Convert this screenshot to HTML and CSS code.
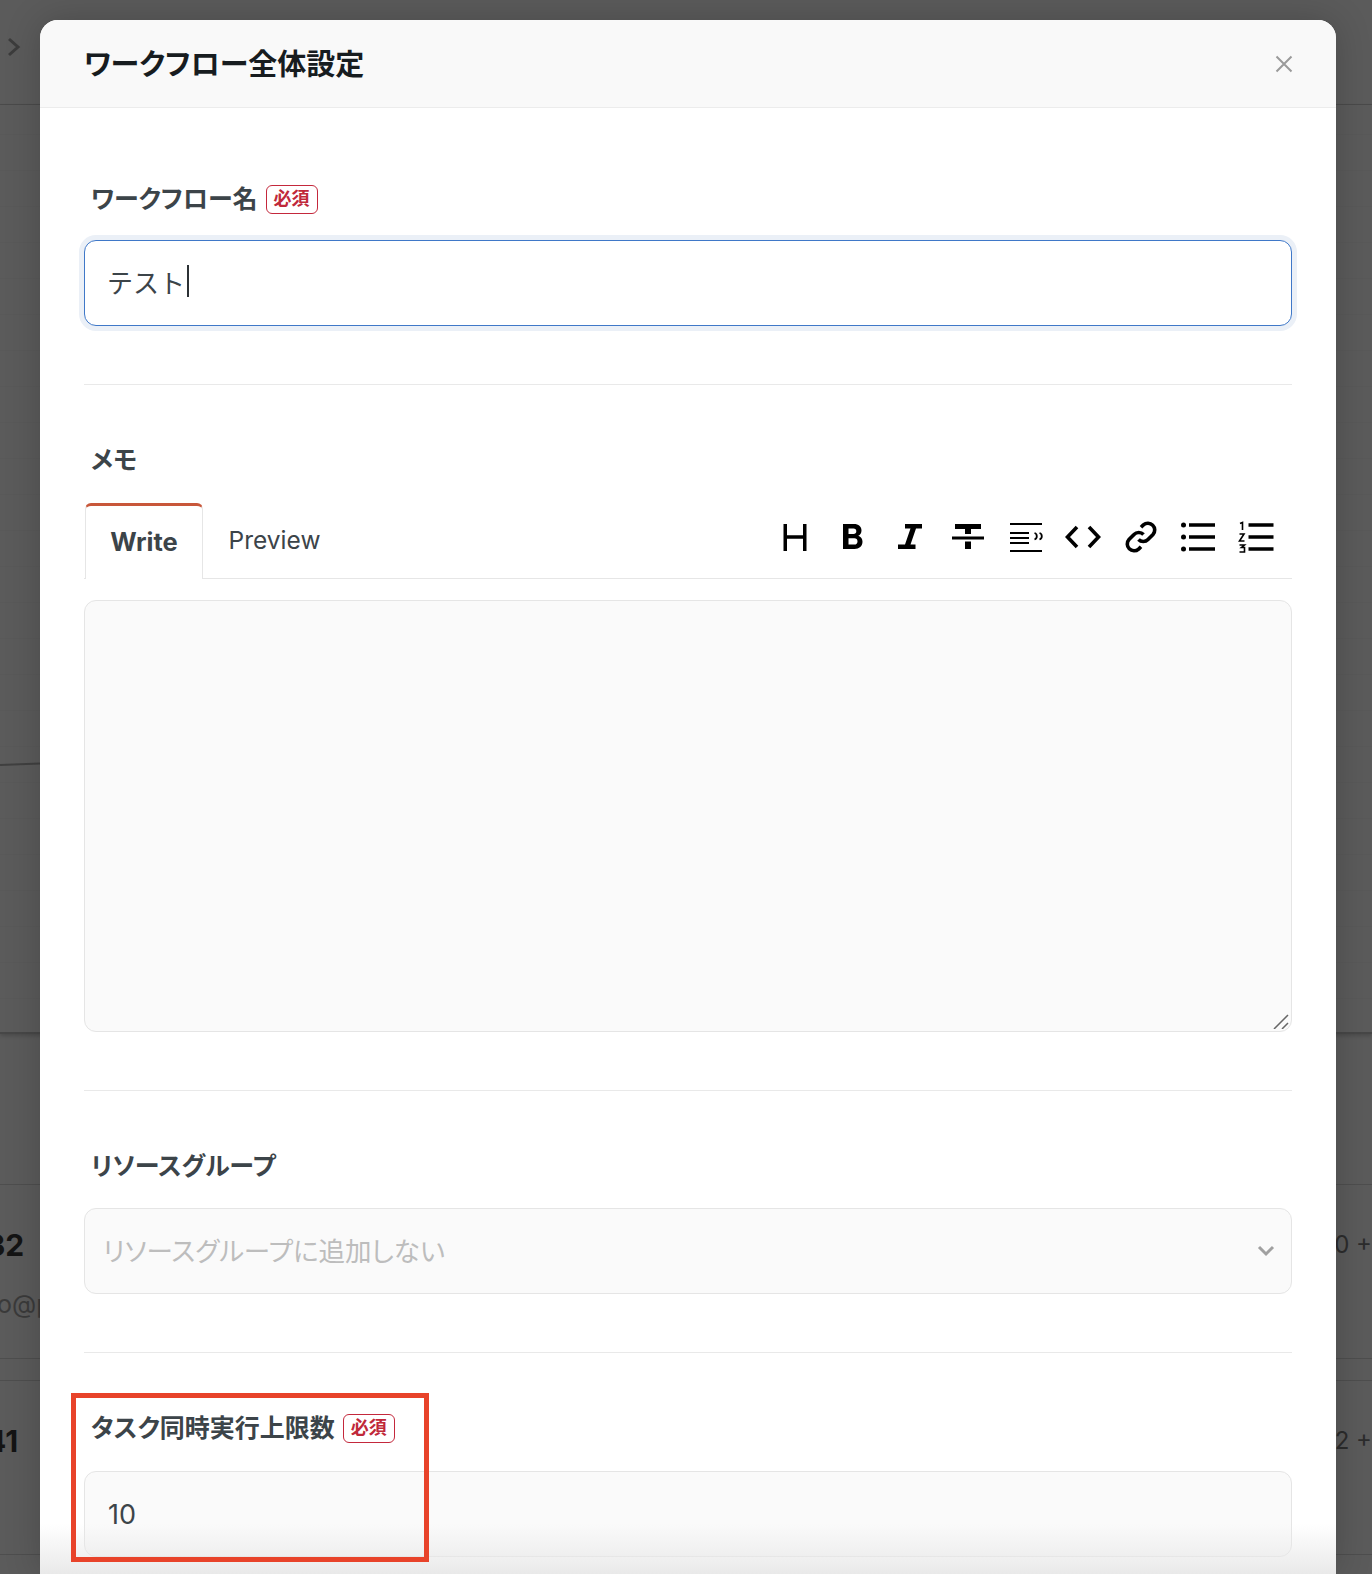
FILE: index.html
```html
<!DOCTYPE html>
<html lang="ja">
<head>
<meta charset="utf-8">
<title>ワークフロー全体設定</title>
<link rel="stylesheet" href="styles.css">
</head>
<body>
<div class="backdrop">
  <div class="bg-top">
    <svg class="bg-chevron" width="14" height="20" viewBox="0 0 14 20"><path d="M2 2l9 8-9 8" fill="none" stroke="#3c3c3c" stroke-width="3"/></svg>
  </div>
  <div class="bg-chart">
    <svg class="bg-curve" width="1372" height="8" viewBox="0 0 1372 8"><path d="M0 5L40 3.500" fill="none" stroke="#404040" stroke-width="2"/></svg>
  </div>
  <div class="bg-gap"></div>
  <div class="bg-row bg-row-a">
    <div class="bg-cell-left"><span class="bg-num">32</span><span class="bg-mail">o@p</span></div>
    <span class="bg-plus">0 +</span>
  </div>
  <div class="bg-sep"></div>
  <div class="bg-row bg-row-b">
    <div class="bg-cell-left"><span class="bg-num">41</span></div>
    <span class="bg-plus">2 +</span>
  </div>
</div>

<main class="modal">
  <header class="modal-head">
    <h1 class="modal-title">ワークフロー全体設定</h1>
    <svg class="close" width="18" height="18" viewBox="0 0 18 18"><path d="M1.500 1.500l15 15M16.500 1.500l-15 15" fill="none" stroke="#9a9a9a" stroke-width="2"/></svg>
  </header>
  <div class="modal-body">
    <section class="field field-first">
      <div class="label"><span>ワークフロー名</span><span class="badge">必須</span></div>
      <div class="control control-focus"><span class="typed">テスト</span><span class="caret"></span></div>
    </section>
    <section class="field">
      <div class="label"><span>メモ</span></div>
      <div class="tabbar">
        <div class="tab tab-active">Write</div>
        <div class="tab tab-plain">Preview</div>
        <div class="toolbar">
          <svg class="tool" width="36" height="32" viewBox="-2 0 36 32"><path d="M6.250 3v27M25.750 3v27M6.250 16h19.500" fill="none" stroke="#000" stroke-width="3.500"/></svg>
          <svg class="tool" width="36" height="32" viewBox="-2 0 36 32"><path fill-rule="evenodd" d="M6 3h11c4.500 0 7.500 2.500 7.500 6.500 0 2.500-1.200 4.300-3.200 5.300 2.700.9 4.200 3 4.200 6 0 4.500-3.300 7.200-8 7.200H6zM11.500 7.500v5.500h5c1.800 0 2.800-1 2.800-2.800s-1-2.700-2.800-2.700zM11.500 17.300v6.200h5.800c2 0 3.200-1.200 3.200-3.100s-1.200-3.100-3.200-3.100z"/></svg>
          <svg class="tool" width="36" height="32" viewBox="-2 0 36 32"><path d="M11 3h17v4.500h-6l-5.500 16h5V28H4v-4.500h7l5.500-16H11z"/></svg>
          <svg class="tool" width="36" height="32" viewBox="-2 0 36 32"><path d="M3 3h26v5H19v5h-6V8H3zM0 15.500h32v3H0zM13 20.500h6V28h-6z"/></svg>
          <svg class="tool" width="36" height="32" viewBox="-2 0 36 32"><path d="M0 3h32M0 12h19M0 17h19M0 22h19M0 30h32" fill="none" stroke="#000" stroke-width="2"/><path d="M24.500 12c1.800.5 2.300 1.800 2.300 3.200 0 1.500-.8 2.700-2.300 3.300M29.500 12c1.800.5 2.300 1.800 2.300 3.200 0 1.500-.8 2.700-2.300 3.300" fill="none" stroke="#000" stroke-width="1.800"/></svg>
          <svg class="tool" width="36" height="32" viewBox="0 0 36 32"><path d="M12 6L2.500 16l9.500 10M24 6l9.500 10L24 26" fill="none" stroke="#000" stroke-width="3.600"/></svg>
          <svg class="tool" width="36" height="32" viewBox="-2 0 36 32"><path d="M13.500 18.500a6.500 6.500 0 0 0 9.500 0l5-5a6.800 6.800 0 0 0-9.600-9.600l-2.400 2.400M18.500 13.500a6.500 6.500 0 0 0-9.500 0l-5 5a6.800 6.800 0 0 0 9.600 9.600l2.400-2.400" fill="none" stroke="#000" stroke-width="3.600"/></svg>
          <svg class="tool" width="36" height="32" viewBox="-1 0 36 32"><path d="M8 4h26M8 16h26M8 28h26" fill="none" stroke="#000" stroke-width="3.500"/><circle cx="2.500" cy="4" r="2.500"/><circle cx="2.500" cy="16" r="2.500"/><circle cx="2.500" cy="28" r="2.500"/></svg>
          <svg class="tool" width="36" height="32" viewBox="-.5 0 36 32"><path d="M10 4h25M10 16h25M10 28h25" fill="none" stroke="#000" stroke-width="3.500"/><path d="M1.500 2.500l2.500-1V9M1 13h4.500L1 20h5M1 24h5l-3 2.500h3V31H1" fill="none" stroke="#000" stroke-width="1.600"/></svg>
        </div>
      </div>
      <div class="memo">
        <svg class="resize" width="16" height="16" viewBox="0 0 16 16"><path d="M1 16L15 2M9 16l6-6" fill="none" stroke="#666" stroke-width="1.500"/></svg>
      </div>
    </section>
    <section class="field">
      <div class="label"><span>リソースグループ</span></div>
      <div class="control control-muted control-select">
        <span class="placeholder">リソースグループに追加しない</span>
        <svg width="18" height="12" viewBox="0 0 18 12"><path d="M2 2l7 7 7-7" fill="none" stroke="#a0a0a0" stroke-width="3"/></svg>
      </div>
    </section>
    <section class="field field-last">
      <div class="label"><span>タスク同時実行上限数</span><span class="badge">必須</span></div>
      <div class="control control-muted control-number"><span>10</span></div>
    </section>
  </div>
  <div class="fade"></div>
</main>
<div class="highlight"></div>
</body>
</html>
```
FILE: styles.css
```css
* { box-sizing: border-box; }
html, body { margin: 0; height: 1574px; }
body {
  position: relative;
  overflow: hidden;
  background: #5a5a5a;
  font-family: Inter, "Noto Sans CJK JP", sans-serif;
  color: #3c4449;
}

/* dimmed page behind the dialog */
.backdrop {
  position: absolute;
  inset: 0;
  background: #5b5b5b;
  display: flex;
  flex-direction: column;
}
.bg-top {
  height: 105px;
  flex: none;
  border-bottom: 1px solid #4c4c4c;
  padding: 37px 0 0 7px;
}
.bg-chevron { display: block; }
.bg-chart {
  height: 929px;
  flex: none;
  padding-top: 655px;
  border-bottom: 2px solid #474747;
  box-shadow: 0 2px 4px rgba(0,0,0,.18);
  background: repeating-linear-gradient(to bottom, transparent 0 29px, rgba(0,0,0,.028) 29px 30px, transparent 30px 36px);
}
.bg-curve { display: block; }
.bg-gap { height: 151px; flex: none; border-bottom: 1px solid #4e4e4e; }
.bg-row {
  flex: none;
  display: flex;
  justify-content: space-between;
}
.bg-row-a { height: 174px; padding-top: 42px; border-bottom: 1px solid #4e4e4e; }
.bg-sep { height: 22px; flex: none; border-bottom: 1px solid #4e4e4e; }
.bg-row-b { height: 174px; padding-top: 42px; border-bottom: 1px solid #4e4e4e; }
.bg-cell-left { display: flex; flex-direction: column; gap: 26px; margin-left: -14px; }
.bg-num { font-size: 30px; line-height: 36px; font-weight: 700; color: #141414; }
.bg-mail { font-size: 25px; line-height: 30px; color: #3a3a3a; margin-left: 11px; }
.bg-plus { font-size: 24px; line-height: 36px; color: #2c2c2c; white-space: nowrap; margin-right: 0; }

/* dialog */
.modal {
  position: relative;
  margin: 20px 36px 0 40px;
  height: 1554px;
  background: #fff;
  border-radius: 18px 18px 0 0;
  overflow: hidden;
  box-shadow: 0 0 36px rgba(0,0,0,.2);
}
.modal-head {
  height: 88px;
  padding: 2px 44px 0;
  background: #f9f9f9;
  border-bottom: 1px solid #ececec;
  display: flex;
  align-items: center;
  justify-content: space-between;
}
.modal-title {
  margin: 0;
  font-size: 29px;
  line-height: 40px;
  font-weight: 700;
  font-feature-settings: "palt";
  color: #171c1f;
}
.close { flex: none; margin: -2px -1px 0 0; }
.modal-body { padding: 0 44px; }
.field {
  padding: 57px 0 58px;
  border-bottom: 1px solid #e9e9e9;
}
.field-first { padding-top: 73px; }
.field-last { border-bottom: 0; }
.label {
  display: flex;
  align-items: center;
  gap: 8px;
  height: 32px;
  margin: 0 0 28px 7px;
  font-size: 25px;
  font-weight: 700;
  font-feature-settings: "palt";
  color: #3c4449;
}
.field-first .label { margin-bottom: 27px; }
.field-last .label { margin-bottom: 29px; }
.badge {
  height: 29px;
  margin-top: 5px;
  padding: 0 7px;
  border: 1px solid #c4283c;
  border-radius: 6px;
  font-size: 18px;
  line-height: 26px;
  font-feature-settings: normal;
  color: #c0283a;
  background: #fff;
}
.control {
  height: 86px;
  padding: 0 23px;
  border-radius: 12px;
  display: flex;
  align-items: center;
  font-size: 26px;
  color: #3c4449;
}
.control-focus {
  border: 1.500px solid #3f78c8;
  background: #fff;
  box-shadow: 0 0 0 5px #ebf0f7;
  padding: 0 22px 4px;
}
.caret {
  display: inline-block;
  width: 2px;
  height: 32px;
  margin-left: 2px;
  background: #2c3135;
}
.control-muted {
  background: #fafafa;
  border: 1px solid #e5e5e5;
}
.control-number { font-size: 27px; }
.control-select {
  padding: 0 16px 0 18px;
  justify-content: space-between;
}
.placeholder {
  margin-bottom: 4px;
  font-size: 26.500px;
  font-feature-settings: "palt";
  color: #bdbdbd;
}

.tabbar {
  display: flex;
  align-items: stretch;
  height: 77px;
  border-bottom: 1px solid #e6e6e6;
  margin-bottom: 21px;
}
.tab {
  display: flex;
  align-items: center;
  justify-content: center;
  margin-bottom: -1px;
  padding-bottom: 2px;
  color: #3c4449;
  white-space: nowrap;
}
.tab-active {
  width: 118px;
  margin: 1px 0 -1px 1px;
  font-size: 25.500px;
  font-weight: 700;
  background: #fff;
  border: 1px solid #e6e6e6;
  border-top: 3px solid #c8573a;
  border-bottom: 0;
  border-radius: 6px 6px 0 0;
}
.tab-plain { width: 143px; font-size: 24.500px; }
.toolbar {
  margin-left: auto;
  display: flex;
  align-items: center;
  justify-content: flex-end;
  gap: 21.600px;
  padding: 0 18px 6px 0;
}
.tool { display: block; flex: none; }
.memo {
  position: relative;
  height: 432px;
  background: #fafafa;
  border: 1px solid #e5e5e5;
  border-radius: 12px;
}
.resize { position: absolute; right: 2px; bottom: 2px; }

.fade {
  position: absolute;
  left: 0;
  right: 0;
  bottom: 0;
  height: 50px;
  background: linear-gradient(to bottom, rgba(232,232,232,0), rgba(232,232,232,.95));
  pointer-events: none;
}
.highlight {
  position: absolute;
  left: 71px;
  top: 1393px;
  width: 358px;
  height: 169px;
  border: 5px solid #e8432a;
}
```
